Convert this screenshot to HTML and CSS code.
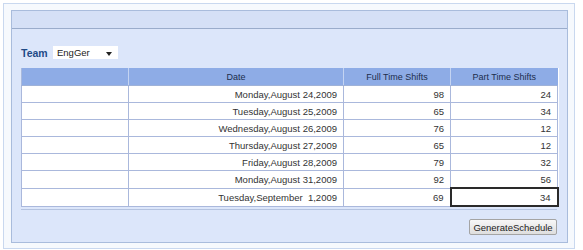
FILE: index.html
```html
<!DOCTYPE html>
<html lang="en">
<head>
  <meta charset="UTF-8" />
  <title>Schedule</title>
  <link rel="stylesheet" href="styles.css">
</head>
<body>
  <div class="marco">
    <div class="panel">
      <div class="panel-barra"></div>
      <div class="panel-cuerpo">
        <div class="fila-equipo">
          <span class="equipo-label">Team</span>
          <span class="selector">EngGer<span class="flecha"></span></span>
        </div>

        <div class="tabla-caja">
          <table>
            <colgroup>
              <col class="c1"><col class="c2"><col class="c3"><col class="c4">
            </colgroup>
            <thead>
              <tr><th></th><th>Date</th><th>Full Time Shifts</th><th>Part Time Shifts</th></tr>
            </thead>
            <tbody>
              <tr><td></td><td>Monday,August 24,2009</td><td>98</td><td>24</td></tr>
              <tr><td></td><td>Tuesday,August 25,2009</td><td>65</td><td>34</td></tr>
              <tr><td></td><td>Wednesday,August 26,2009</td><td>76</td><td>12</td></tr>
              <tr><td></td><td>Thursday,August 27,2009</td><td>65</td><td>12</td></tr>
              <tr><td></td><td>Friday,August 28,2009</td><td>79</td><td>32</td></tr>
              <tr><td></td><td>Monday,August 31,2009</td><td>92</td><td>56</td></tr>
              <tr><td></td><td>Tuesday,September&nbsp; 1,2009</td><td>69</td><td class="activa">34</td></tr>
            </tbody>
          </table>
        </div>

        <div class="acciones">
          <button class="boton">GenerateSchedule</button>
        </div>
      </div>
    </div>
  </div>
</body>
</html>
```

FILE: styles.css
```css
body {
  margin: 0;
  background-color: #ffffff;
  font-family: 'Liberation Sans', Arial, sans-serif;
  font-size: 9px;
  color: #333;
}
.marco {
  margin: 3px 0 0 3px;
  width: 572px;
  height: 246px;
  box-sizing: border-box;
  border: 1px solid #c9d8ef;
  padding: 6px 0 0 7px;
  background-color: #f6f9fd;
}
.panel {
  width: 557px;
  height: 233px;
  box-sizing: border-box;
  border: 1px solid #a9bcdc;
  background-color: #dce6fa;
}
.panel-barra {
  height: 17px;
  background-color: #d5e0f6;
  border-bottom: 1px solid #9aaccb;
}
.panel-cuerpo {
  padding: 17px 9px 0 9px;
}
.fila-equipo {
  display: flex;
  align-items: center;
  height: 13px;
}
.equipo-label {
  font-weight: bold;
  font-size: 10.5px;
  color: #1f4a86;
  width: 32px;
}
.selector {
  display: flex;
  align-items: center;
  justify-content: space-between;
  width: 65px;
  height: 13px;
  box-sizing: border-box;
  padding: 0 6px 0 4px;
  background-color: #ffffff;
  font-size: 9.5px;
  color: #222;
}
.flecha {
  width: 0;
  height: 0;
  border-left: 3px solid transparent;
  border-right: 3px solid transparent;
  border-top: 4px solid #222;
  margin-top: 2px;
}
.tabla-caja {
  margin-top: 9px;
  width: 536px;
  padding-bottom: 2px;
  border-bottom: 1px solid #b4c3e0;
}
table {
  width: 536px;
  border-collapse: collapse;
  table-layout: fixed;
  background-color: #ffffff;
}
.c1 { width: 107px; }
.c2 { width: 215px; }
.c3 { width: 107px; }
.c4 { width: 107px; }
th {
  height: 17px;
  padding: 0;
  background-color: #8eace6;
  color: #1c2c4c;
  font-weight: normal;
  font-size: 9px;
  text-align: center;
  border-left: 1px solid #c4d4f2;
  border-bottom: 1px solid #9fb2d8;
}
th:first-child {
  border-left: 1px solid #a9b9dc;
}
td {
  height: 16px;
  padding: 0 6px 0 0;
  text-align: right;
  border: 1px solid #aab8dc;
  color: #333;
  font-size: 9.5px;
  white-space: nowrap;
}
td.activa {
  border: 2px solid #2a2a2a;
}
.acciones {
  display: flex;
  justify-content: flex-end;
  width: 536px;
  margin-top: 9px;
}
.boton {
  width: 88px;
  height: 16px;
  padding: 0;
  font-family: 'Liberation Sans', Arial, sans-serif;
  font-size: 9.5px;
  color: #222;
  background: linear-gradient(#f7f7f7, #dedede);
  border: 1px solid #a4a4a4;
  border-radius: 2px;
}
```
